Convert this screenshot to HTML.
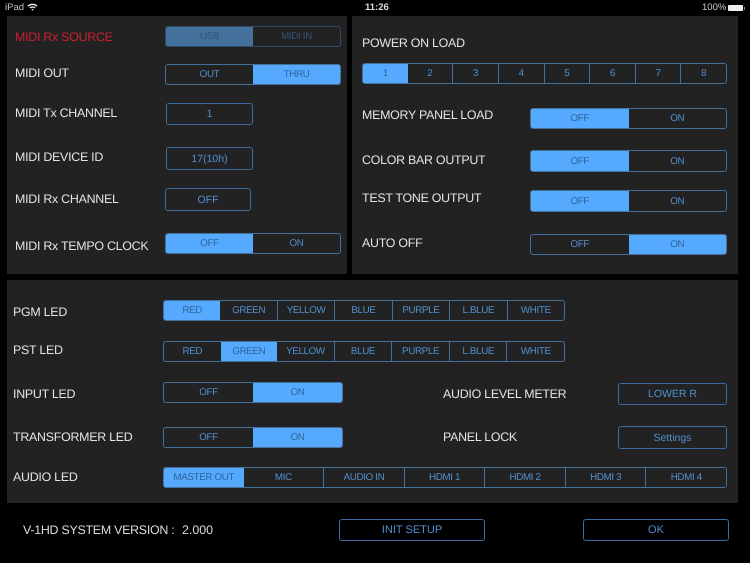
<!DOCTYPE html>
<html><head><meta charset="utf-8"><style>
html,body{margin:0;padding:0;background:#000}
body{width:750px;height:563px;position:relative;overflow:hidden;font-family:"Liberation Sans",sans-serif;text-rendering:geometricPrecision}
#w{position:absolute;left:0;top:0;width:750px;height:563px;filter:blur(.3px)}
.p{position:absolute;background:#222}
.l{position:absolute;color:#e4e4e4;font-size:12.4px;letter-spacing:-0.25px;line-height:20px;height:20px;white-space:nowrap;padding-top:1px}
.s{position:absolute;display:flex;box-sizing:border-box;border:1px solid #44709c;border-radius:3px;overflow:hidden;color:#5190cf;font-size:9.8px;letter-spacing:-0.35px;align-items:stretch}
.s span{flex:1 1 0;display:flex;align-items:center;justify-content:center;border-left:1px solid #44709c;white-space:nowrap;min-width:0}
.s span:first-child{border-left:0}
.s span.a{background:#55a9ff;color:#2f6496;border-left:0}
.s span.a+span{border-left:0}
.two span{border-left:0}
.b{position:absolute;box-sizing:border-box;border:1px solid #3a6c9e;border-radius:3px;color:#5190cf;font-size:10.5px;display:flex;align-items:center;justify-content:center}
.d{border-color:#2d4a66;color:#2f5578}
.d span.a{background:#44719b;color:#2c5275}
</style></head><body><div id="w">
<div class="l" style="left:5px;top:-3px;font-size:9.5px;letter-spacing:0;color:#ccc">iPad</div>
<svg style="position:absolute;left:27px;top:3px" width="11" height="8" viewBox="0 0 11 8"><path d="M0.5 2.6C3.3 0 7.7 0 10.5 2.6L9.5 3.7C7.2 1.6 3.8 1.6 1.5 3.7Z" fill="#e6e6e6"/><path d="M2.4 4.5C4 3 7 3 8.6 4.5L7.6 5.5C6.4 4.5 4.6 4.5 3.4 5.5Z" fill="#e6e6e6"/><path d="M4.3 6.4C5 5.8 6 5.8 6.7 6.4L5.5 7.8Z" fill="#e6e6e6"/></svg>
<div class="l" style="left:365px;top:-3px;font-size:9.5px;letter-spacing:0;color:#ddd;font-weight:bold">11:26</div>
<div class="l" style="left:702px;top:-3px;font-size:9.5px;letter-spacing:0;color:#ccc">100%</div>
<div style="position:absolute;left:728px;top:5px;width:15px;height:6px;background:#eee;border-radius:1px"></div>
<div style="position:absolute;left:744px;top:7px;width:1px;height:3px;background:#888"></div>

<div class="p" style="left:7px;top:16px;width:340px;height:258px"></div>
<div class="p" style="left:352px;top:16px;width:386px;height:258px"></div>
<div class="p" style="left:7px;top:280px;width:731px;height:223px"></div>

<div class="l" style="left:15px;top:26px;color:#c8202c">MIDI Rx SOURCE</div>
<div class="l" style="left:15px;top:62px">MIDI OUT</div>
<div class="l" style="left:15px;top:102px">MIDI Tx CHANNEL</div>
<div class="l" style="left:15px;top:146px">MIDI DEVICE ID</div>
<div class="l" style="left:15px;top:188px">MIDI Rx CHANNEL</div>
<div class="l" style="left:15px;top:235px">MIDI Rx TEMPO CLOCK</div>

<div class="s two d" style="left:165px;top:26px;width:176px;height:21px"><span class="a">USB</span><span>MIDI IN</span></div>
<div class="s two" style="left:165px;top:64px;width:176px;height:21px"><span>OUT</span><span class="a">THRU</span></div>
<div class="b" style="left:166px;top:103px;width:87px;height:22px">1</div>
<div class="b" style="left:166px;top:147px;width:87px;height:23px">17(10h)</div>
<div class="b" style="left:165px;top:188px;width:86px;height:23px">OFF</div>
<div class="s two" style="left:165px;top:233px;width:176px;height:21px"><span class="a">OFF</span><span>ON</span></div>

<div class="l" style="left:362px;top:32px">POWER ON LOAD</div>
<div class="l" style="left:362px;top:104px">MEMORY PANEL LOAD</div>
<div class="l" style="left:362px;top:149px">COLOR BAR OUTPUT</div>
<div class="l" style="left:362px;top:187px">TEST TONE OUTPUT</div>
<div class="l" style="left:362px;top:232px">AUTO OFF</div>

<div class="s" style="left:362px;top:63px;width:365px;height:21px"><span class="a">1</span><span>2</span><span>3</span><span>4</span><span>5</span><span>6</span><span>7</span><span>8</span></div>
<div class="s two" style="left:530px;top:108px;width:197px;height:21px"><span class="a">OFF</span><span>ON</span></div>
<div class="s two" style="left:530px;top:150px;width:197px;height:22px"><span class="a">OFF</span><span>ON</span></div>
<div class="s two" style="left:530px;top:190px;width:197px;height:22px"><span class="a">OFF</span><span>ON</span></div>
<div class="s two" style="left:530px;top:234px;width:197px;height:21px"><span>OFF</span><span class="a">ON</span></div>

<div class="l" style="left:13px;top:301px">PGM LED</div>
<div class="l" style="left:13px;top:339px">PST LED</div>
<div class="l" style="left:13px;top:383px">INPUT LED</div>
<div class="l" style="left:13px;top:426px">TRANSFORMER LED</div>
<div class="l" style="left:13px;top:466px">AUDIO LED</div>
<div class="l" style="left:443px;top:383px">AUDIO LEVEL METER</div>
<div class="l" style="left:443px;top:426px">PANEL LOCK</div>

<div class="s" style="left:163px;top:300px;width:402px;height:21px"><span class="a">RED</span><span>GREEN</span><span>YELLOW</span><span>BLUE</span><span>PURPLE</span><span>L.BLUE</span><span>WHITE</span></div>
<div class="s" style="left:163px;top:341px;width:402px;height:21px"><span>RED</span><span class="a">GREEN</span><span>YELLOW</span><span>BLUE</span><span>PURPLE</span><span>L.BLUE</span><span>WHITE</span></div>
<div class="s two" style="left:163px;top:382px;width:180px;height:21px"><span>OFF</span><span class="a">ON</span></div>
<div class="s two" style="left:163px;top:427px;width:180px;height:21px"><span>OFF</span><span class="a">ON</span></div>
<div class="s" style="left:163px;top:467px;width:564px;height:21px"><span class="a">MASTER OUT</span><span>MIC</span><span>AUDIO IN</span><span>HDMI 1</span><span>HDMI 2</span><span>HDMI 3</span><span>HDMI 4</span></div>
<div class="b" style="left:618px;top:383px;width:109px;height:22px">LOWER R</div>
<div class="b" style="left:618px;top:426px;width:109px;height:23px">Settings</div>

<div class="l" style="left:23px;top:519px;color:#ddd">V-1HD SYSTEM VERSION :</div>
<div class="l" style="left:182px;top:519px;color:#ddd;letter-spacing:0">2.000</div>
<div class="b" style="left:339px;top:519px;width:146px;height:22px;font-size:11px">INIT SETUP</div>
<div class="b" style="left:583px;top:519px;width:146px;height:22px;font-size:11px">OK</div>
</div></body></html>
